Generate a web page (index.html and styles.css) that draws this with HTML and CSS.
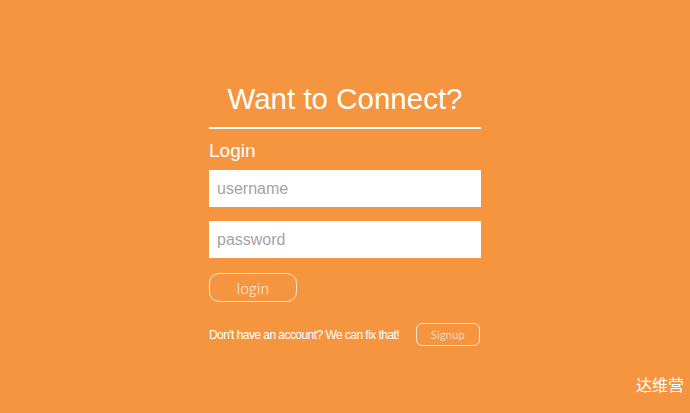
FILE: index.html
```html
<!DOCTYPE html>
<html>
<head>
<meta charset="utf-8">
<link rel="stylesheet" href="styles.css">
</head>
<body>
<div class="page">
  <div class="box">
    <h1 class="title">Want to Connect?</h1>
    <div class="rule"></div>
    <div class="label">Login</div>
    <input class="field" type="text" placeholder="username">
    <input class="field" type="password" placeholder="password">
    <button class="btn btn-login">login</button>
    <div class="signup-row">
      <span class="hint">Don't have an account? We can fix that!</span>
      <button class="btn btn-signup">Signup</button>
    </div>
  </div>
  <div class="mark">达维营</div>
</div>
</body>
</html>
```
FILE: styles.css
```css
html, body {
  margin: 0;
  padding: 0;
  height: 100%;
}
body {
  background: #f69540;
  font-family: "Liberation Sans", Arial, sans-serif;
  color: #fff;
}
.page {
  position: relative;
  height: 413px;
  display: flex;
  justify-content: center;
}
.box {
  width: 272px;
  padding-top: 80px;
  display: flex;
  flex-direction: column;
}
.title {
  margin: 0;
  font-weight: normal;
  font-size: 29.5px;
  line-height: 38px;
  text-align: center;
}
.rule {
  height: 2px;
  background: #fff;
  margin-top: 9px;
}
.label {
  font-size: 19px;
  line-height: 22px;
  margin-top: 11px;
}
.field {
  box-sizing: border-box;
  height: 37px;
  width: 100%;
  border: none;
  outline: none;
  background: #fff;
  padding: 0 8px;
  font-family: "Liberation Sans", Arial, sans-serif;
  font-size: 16px;
  color: #555;
  margin-top: 8px;
}
.field + .field {
  margin-top: 14px;
}
.field::placeholder {
  color: #a4a4a4;
}
.btn {
  box-sizing: border-box;
  background: transparent;
  border: 1px solid rgba(255, 255, 255, 0.75);
  color: #fff;
  font-family: Lato, "Open Sans", sans-serif;
  font-weight: 300;
  padding: 0;
  cursor: pointer;
}
.btn-login {
  width: 88px;
  height: 29px;
  border-radius: 10px;
  margin-top: 15px;
  font-size: 15px;
  letter-spacing: 0.3px;
}
.signup-row {
  display: flex;
  align-items: center;
  justify-content: space-between;
  margin-top: 21px;
}
.hint {
  font-size: 12px;
  letter-spacing: -0.55px;
}
.btn-signup {
  width: 64px;
  height: 23px;
  border-radius: 6px;
  font-size: 11px;
  letter-spacing: 0.3px;
  margin-right: 1px;
}
.mark {
  position: absolute;
  right: 6px;
  bottom: 20px;
  font-family: "Noto Sans CJK SC", sans-serif;
  font-size: 16px;
  line-height: 18px;
  color: #fff;
}
```
